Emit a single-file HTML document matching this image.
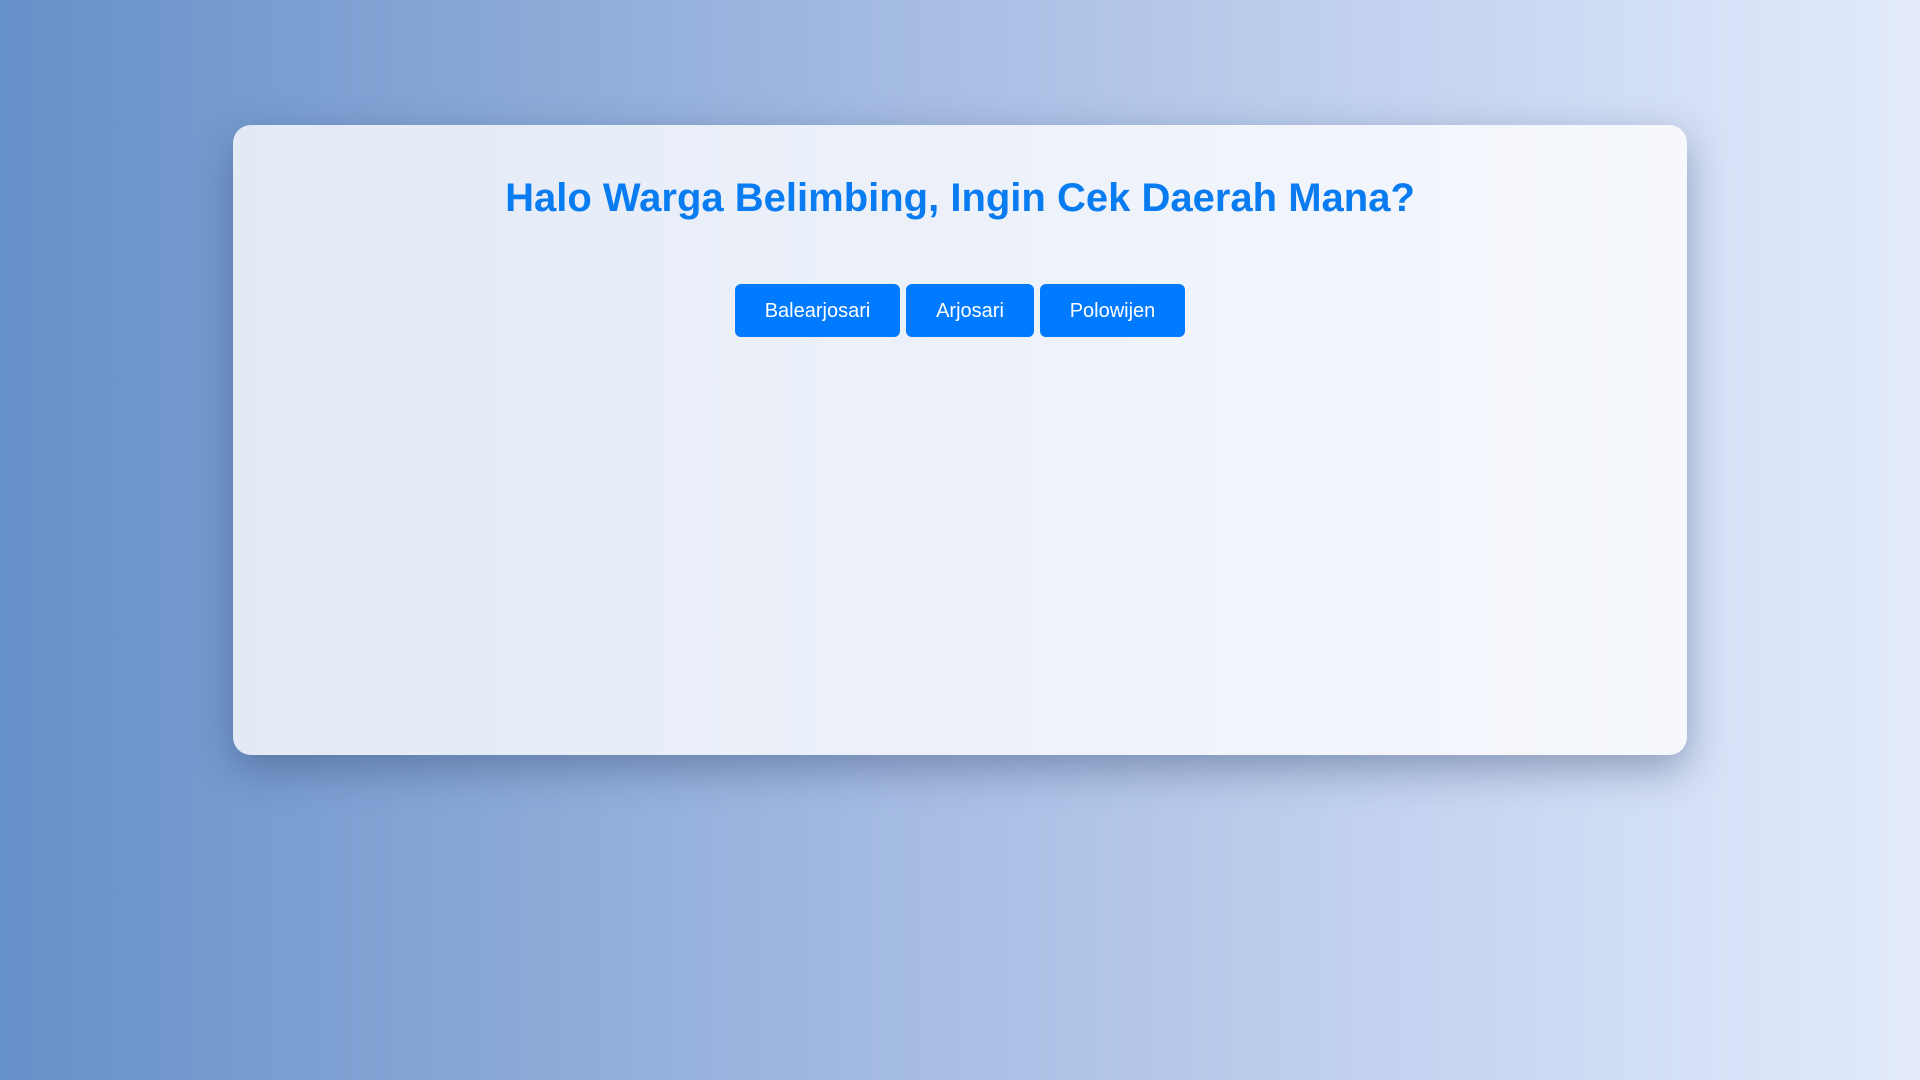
<!DOCTYPE html>
<html><head><meta charset="utf-8"><style>
html,body{margin:0;height:100%;}
body{width:1920px;height:1080px;background:linear-gradient(90deg,#6690c8 0%,#a3bae2 45%,#e3ebfc 100%);font-family:"Liberation Sans",Arial,sans-serif;position:relative;overflow:hidden;}
.card{position:absolute;left:233px;top:125px;width:1454px;height:630px;border-radius:18px;background:linear-gradient(90deg,#e3eaf6,#f6f8fd);box-shadow:0 14px 40px rgba(40,60,100,0.4);}
h1{position:absolute;top:172px;left:0;width:1920px;margin:0;text-align:center;color:#0a7cf2;font-size:40px;font-weight:bold;line-height:52px;}
.btns{position:absolute;top:284px;left:735px;display:flex;gap:6px;}
.b{height:53px;background:#007bff;color:#fff;border-radius:6px;font-size:20px;display:flex;align-items:center;justify-content:center;padding-top:2px;box-sizing:border-box;}
</style></head><body>
<div class="card"></div>
<h1>Halo Warga Belimbing, Ingin Cek Daerah Mana?</h1>
<div class="btns"><div class="b" style="width:165px">Balearjosari</div><div class="b" style="width:128px">Arjosari</div><div class="b" style="width:145px">Polowijen</div></div>
</body></html>
